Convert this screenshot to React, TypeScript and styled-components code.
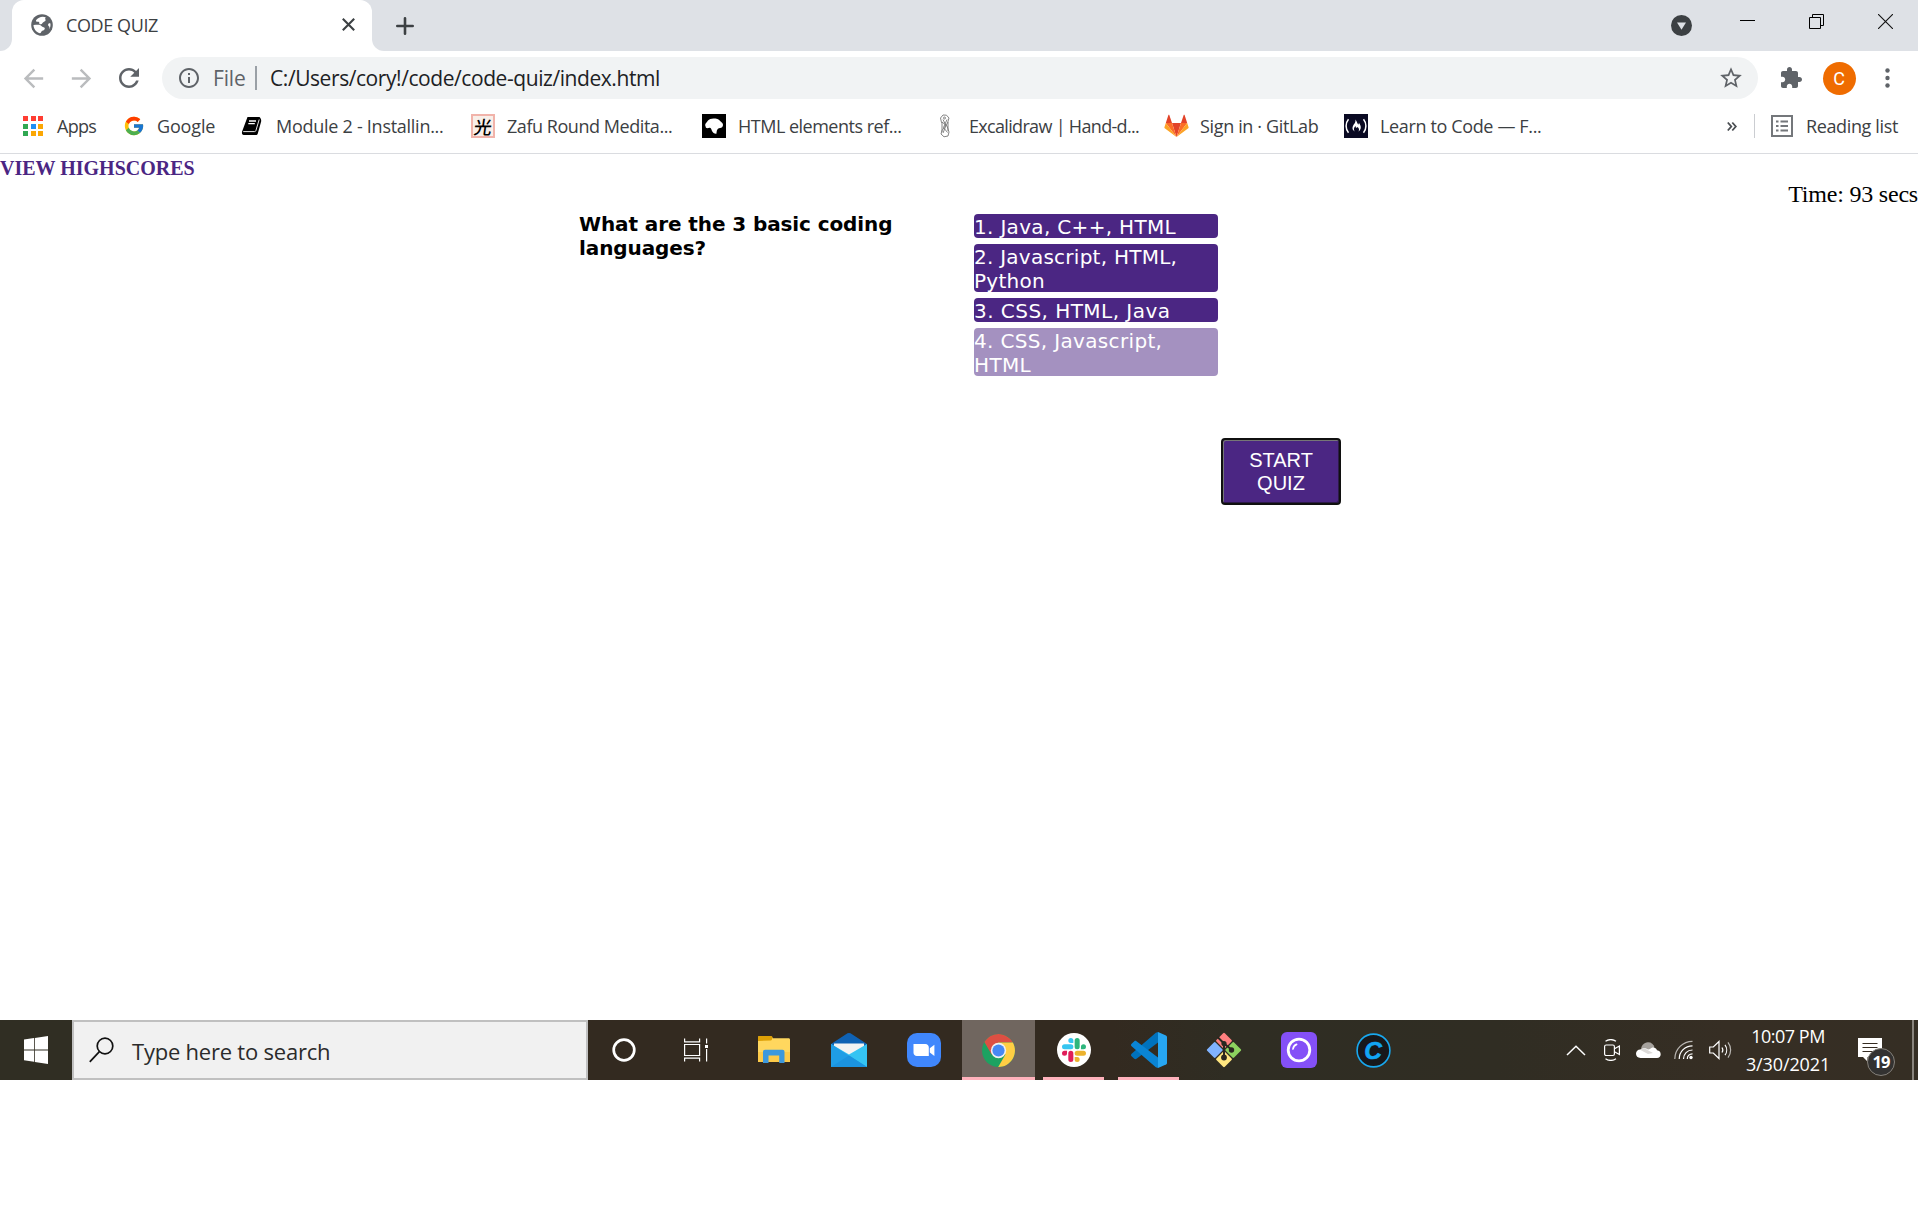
import React from "react";
import styled, { createGlobalStyle } from "styled-components";
import { FcGoogle } from "react-icons/fc";

const UI = `"Open Sans", "Noto Sans", sans-serif`;

const GlobalStyle = createGlobalStyle`
  * { box-sizing: border-box; }
  body { margin: 0; background: #fff; overflow: hidden; }
  svg { display: block; flex: none; }
`;

/* ---------- shared ---------- */

const Screen = styled.div`
  width: 1918px;
  height: 1208px;
  display: flex;
  flex-direction: column;
  background: #fff;
  font-family: ${UI};
  overflow: hidden;
`;

const Label = styled.span<{ $size?: number; $track?: number; $color?: string }>`
  font-size: ${(p) => p.$size ?? 18}px;
  letter-spacing: ${(p) => p.$track ?? 0}px;
  color: ${(p) => p.$color ?? "#3c4043"};
  white-space: pre;
`;

const Slot = styled.div<{ $w: number }>`
  flex: none;
  width: ${(p) => p.$w}px;
  height: 100%;
  display: flex;
  align-items: center;
  justify-content: center;
`;

const Spacer = styled.div`
  flex: 1;
`;

/* ---------- tab strip ---------- */

const TabStrip = styled.div`
  display: flex;
  height: 51px;
  flex: none;
`;

const StripStart = styled.div`
  width: 12px;
  background: #dee1e6;
  border-bottom-right-radius: 12px;
`;

const TabCell = styled.div`
  width: 360px;
  background: linear-gradient(#dee1e6 50%, #fff 50%);
`;

const Tab = styled.div`
  height: 51px;
  display: flex;
  align-items: center;
  gap: 13px;
  padding: 0 17px 2px 19px;
  background: #fff;
  border-radius: 12px 12px 0 0;
`;

const StripRest = styled.div`
  flex: 1;
  display: flex;
  align-items: center;
  padding-left: 24px;
  background: #dee1e6;
  border-bottom-left-radius: 12px;
`;

const WindowControls = styled.div`
  display: flex;
  height: 43px;
  align-self: flex-start;
  margin-left: 21px;
  margin-right: -2px;
`;

/* ---------- toolbar ---------- */

const Toolbar = styled.div`
  display: flex;
  align-items: center;
  height: 54px;
  flex: none;
  padding: 0 7px 0 9px;
`;

const Omnibox = styled.div`
  display: flex;
  align-items: center;
  width: 1596px;
  height: 42px;
  margin: 0 9px;
  padding: 0 14px 0 15px;
  border-radius: 21px;
  background: #f1f3f4;
`;

const Scheme = styled(Label)`
  width: 42px;
  margin-left: 12px;
`;

const Divider = styled.div<{ $color: string; $w: number }>`
  flex: none;
  width: ${(p) => p.$w}px;
  height: 24px;
  background: ${(p) => p.$color};
`;

const Url = styled(Label)`
  margin-left: 13px;
`;

const Avatar = styled.div`
  width: 33px;
  height: 33px;
  display: flex;
  align-items: center;
  justify-content: center;
  border-radius: 50%;
  background: #ef6c00;
  color: #fff;
  font: 400 18px Roboto, sans-serif;
`;

/* ---------- bookmarks ---------- */

const BookmarkBar = styled.div`
  display: flex;
  align-items: center;
  height: 49px;
  flex: none;
  padding: 0 20px 6px 21px;
  border-bottom: 1px solid #dadce0;
`;

const Bookmark = styled.div<{ $w: number; $gap: number }>`
  display: flex;
  align-items: center;
  gap: ${(p) => p.$gap}px;
  width: ${(p) => p.$w}px;
  flex: none;
`;

const BookmarkLabel = styled(Label)`
  padding-bottom: 1px;
`;

const BookmarkIcon = styled.div`
  width: 24px;
  height: 24px;
  flex: none;
  display: flex;
  align-items: center;
  justify-content: center;
`;

const AppsGrid = styled.div`
  display: grid;
  grid-template-columns: repeat(3, 5px);
  grid-auto-rows: 5px;
  gap: 2.5px;
`;

const Dot = styled.i<{ $c: string }>`
  background: ${(p) => p.$c};
`;

const Zafu = styled.div`
  width: 24px;
  height: 24px;
  display: flex;
  align-items: center;
  justify-content: center;
  border: 2px solid #f1b3aa;
  background: #f8efe9;
  color: #000;
  font: 500 18px/20px "Noto Sans CJK JP", "Noto Sans CJK SC", sans-serif;
`;

const Brush = styled.span`
  transform: skewX(-8deg);
`;

const ReadingList = styled.div`
  display: flex;
  align-items: center;
  gap: 13px;
  margin-left: 16px;
`;

const More = styled.div`
  width: 10px;
  margin-right: 17px;
`;

/* ---------- page ---------- */

const Page = styled.main`
  height: 866px;
  flex: none;
  background: #fff;
`;

const Highscores = styled.a`
  display: block;
  height: 26px;
  padding-top: 2px;
  font: 700 20px/24px "Liberation Serif", serif;
  color: #4b2683;
`;

const Timer = styled.div`
  height: 32px;
  font: 400 24px/28px "Liberation Serif", serif;
  letter-spacing: -0.2px;
  color: #000;
  white-space: nowrap;
  text-align: right;
`;

const Quiz = styled.section`
  display: flex;
  height: 226px;
  padding-left: 579px;
`;

const Question = styled.h2`
  margin: 0;
  width: 395px;
  padding-right: 60px;
  font: 700 20px/24px "DejaVu Sans", sans-serif;
  letter-spacing: -0.1px;
  color: #000;
`;

const Answers = styled.ol`
  list-style: none;
  margin: 2px 0 0;
  padding: 0;
  width: 244px;
  display: flex;
  flex-direction: column;
  gap: 6px;
`;

const Answer = styled.li<{ $track: number; $faded?: boolean }>`
  border-radius: 4px;
  background: #4b2683;
  color: #fff;
  font: 400 20px/24px "DejaVu Sans", sans-serif;
  letter-spacing: ${(p) => p.$track}px;
  opacity: ${(p) => (p.$faded ? 0.5 : 1)};
`;

const AnswerText = styled.span`
  display: block;
  transform: translateY(1px);
`;

const StartButton = styled.button`
  display: block;
  width: 120px;
  height: 67px;
  margin: 0 0 0 1221px;
  padding: 0 16px;
  border: 2px solid #101010;
  border-radius: 4px;
  box-shadow: inset 1px 1px 0 #767676, inset -1px -1px 0 #2c1a48;
  background: #4b2683;
  color: #fff;
  font: 400 20px/23px "Liberation Sans", Arial, sans-serif;
`;

/* ---------- taskbar ---------- */

const Taskbar = styled.footer`
  display: flex;
  height: 60px;
  flex: none;
  background: linear-gradient(90deg, #302e23 0%, #302e23 4%, #332a20 31%, #332a20 58%, #2f2d23 64%, #302d23 78%, #362e24 90%, #352e24 100%);
`;

const Search = styled.div`
  width: 516px;
  display: flex;
  align-items: center;
  gap: 18px;
  padding-left: 15px;
  border: 2px solid #c0c0c0;
  background: #f1f1f1;
`;

const SearchText = styled(Label)`
  padding-top: 2px;
`;

const TaskSlot = styled.div<{ $active?: boolean; $open?: boolean }>`
  width: 75px;
  height: 60px;
  flex: none;
  padding: 0 ${(p) => (p.$active ? 1 : 7)}px;
  display: flex;
  align-items: center;
  justify-content: center;
  background: ${(p) => (p.$active ? "#70665f" : "transparent")} content-box;
  position: relative;

  &::after {
    content: "";
    display: ${(p) => (p.$open || p.$active ? "block" : "none")};
    position: absolute;
    left: ${(p) => (p.$active ? 1 : 7)}px;
    right: ${(p) => (p.$active ? 1 : 7)}px;
    bottom: 0;
    height: 3px;
    background: #ffb2bc;
  }
`;

const Clock = styled.div`
  width: 100px;
  margin-top: 2px;
  display: flex;
  flex-direction: column;
  align-items: center;
  line-height: 28px;
`;

const Notifications = styled.div`
  position: relative;
  width: 60px;
  height: 60px;
  margin-right: 14px;
`;

const BubbleIcon = styled.svg`
  margin: 18px 0 0 20px;
`;

const Badge = styled.div`
  position: absolute;
  left: 29px;
  top: 28px;
  width: 28px;
  height: 28px;
  padding-bottom: 1px;
  border-radius: 50%;
  border: 1px solid #85817b;
  background: #333231;
  display: flex;
  align-items: center;
  justify-content: center;
  color: #fff;
  font: 700 16.5px ${UI};
  letter-spacing: -0.9px;
`;

const ShowDesktop = styled.div`
  width: 6px;
  border-left: 2px solid #89847d;
`;

/* ---------- icons ---------- */

const Glyph = ({ d, size, color = "#5f6368" }: { d: string; size: number; color?: string }) => (
  <svg width={size} height={size} viewBox="0 0 24 24" fill={color}>
    <path d={d} />
  </svg>
);

const BACK = "M20 11H7.83l5.59-5.59L12 4l-8 8 8 8 1.41-1.41L7.83 13H20v-2z";
const FORWARD = "M4 11h12.17l-5.59-5.59L12 4l8 8-8 8-1.41-1.41L16.17 13H4v-2z";
const RELOAD =
  "M17.65 6.35C16.2 4.9 14.21 4 12 4c-4.42 0-7.99 3.58-7.99 8s3.57 8 7.99 8c3.73 0 6.84-2.55 7.73-6h-2.08c-.82 2.33-3.04 4-5.65 4-3.31 0-6-2.69-6-6s2.69-6 6-6c1.66 0 3.14.69 4.22 1.78L13 11h7V4l-2.35 2.35z";
const INFO =
  "M11 7h2v2h-2zm0 4h2v6h-2zm1-9C6.48 2 2 6.48 2 12s4.48 10 10 10 10-4.48 10-10S17.52 2 12 2zm0 18c-4.41 0-8-3.59-8-8s3.59-8 8-8 8 3.59 8 8-3.59 8-8 8z";
const STAR =
  "M22 9.24l-7.19-.62L12 2 9.19 8.63 2 9.24l5.46 4.73L5.82 21 12 17.27 18.18 21l-1.63-7.03L22 9.24zM12 15.4l-3.76 2.27 1-4.28-3.32-2.88 4.38-.38L12 6.1l1.71 4.04 4.38.38-3.32 2.88 1 4.28L12 15.4z";
const PUZZLE =
  "M20.5 11H19V7c0-1.1-.9-2-2-2h-4V3.5C13 2.12 11.88 1 10.5 1S8 2.12 8 3.5V5H4c-1.1 0-1.99.9-1.99 2v3.8H3.5c1.49 0 2.7 1.21 2.7 2.7s-1.21 2.7-2.7 2.7H2V20c0 1.1.9 2 2 2h3.8v-1.5c0-1.49 1.21-2.7 2.7-2.7 1.49 0 2.7 1.21 2.7 2.7V22H17c1.1 0 2-.9 2-2v-4h1.500c1.38 0 2.5-1.12 2.5-2.5S21.88 11 20.5 11z";

const GlobeIcon = () => (
  <svg width="22" height="22" viewBox="0 0 22 22">
    <circle cx="11" cy="11" r="10.8" fill="#5f6368" />
    <path
      fill="#fff"
      d="M14.8 3.200C11 1.900 7.200 3.200 5.200 6c-.7 1.100.2 2 1.500 1.800 1-.2 1.800.4 1.600 1.400-.1.800.8 1.200 1.700 1 1.200-.3 1.500-1.700 2.700-2.300.9-.5 1.900-.700 1.900-1.700 0-.8-.5-.9-.4-1.700 0-.5.300-.9.600-1.300z"
    />
    <path
      fill="#fff"
      d="M2.500 11c.1 3.900 2.700 7.200 6.300 8.200 1.500-.2 1.200-1.700 2.200-2.300 1.200-.6 2.600-.8 2.800-2.200.1-1.200-.9-1.700-2-1.800-1.200-.1-1.500-1.500-2.800-1.900-1.300-.5-4.300 0-6.500 0zM19.400 9.500c-1.200-.5-2.400.2-2.300 1.400.1 1.100 1.300 1.300 1.400 2.300 0 .700-.2 1.500-.3 2.100 1.100-1.700 1.500-3.900 1.200-5.800z"
    />
  </svg>
);

const CloseIcon = () => (
  <svg width="13" height="13" viewBox="0 0 13 13" stroke="#3c4043" strokeWidth="2.1">
    <path d="M.8.8l11.400 11.400M12.200.8L.8 12.200" />
  </svg>
);

const PlusIcon = () => (
  <svg width="18" height="18" viewBox="0 0 18 18" stroke="#3c4043" strokeWidth="2.600" strokeLinecap="round">
    <path d="M9 1.300v15.400M1.300 9h15.400" />
  </svg>
);

const TabSearchIcon = () => (
  <svg width="21" height="21" viewBox="0 0 21 21">
    <circle cx="10.500" cy="10.500" r="10.500" fill="#3c4043" />
    <path d="M6 7.500h9l-4.500 7.200z" fill="#dee1e6" />
  </svg>
);

const BookIcon = () => (
  <svg width="21" height="20" viewBox="0 0 21 20">
    <path d="M6.500 1h11.700c1 0 2.600 2.800 1.800 5l-3.200 11.500c-.3 1-1 1.500-2 1.500H2.800C1 19 .8 17.500 1 15.800z" fill="#000" />
    <path d="M8 5h7M7.300 7.700h6.500" stroke="#fff" strokeWidth="1.300" />
    <path d="M2.200 15.600h11.300c.8 0 1.200-.4 1.400-1L18.200 3.500" fill="none" stroke="#fff" strokeWidth=".9" />
  </svg>
);

const HtmlRefIcon = () => (
  <svg width="24" height="24" viewBox="0 0 24 24">
    <path d="M0 0h24v24H0z" />
    <path d="M3.200 11.500C2.800 9.500 5 8.500 6 6.600 7.300 4.800 10.500 4 13.500 4.600c3 .3 4 2 6 3.600 1.700 1.200 2 3 .8 4.900-1.300 1.200-3.200.8-4.300 1.600-1.300 1-1.300 2.800-1.600 5-2 .2-3.600-.9-4.400-2.600-.6-1.800-.6-2.600-1.600-3.200-1.800-.3-2.600.6-4 .2-1-.5-.5-1.700-1.200-2.600z" fill="#fff" />
  </svg>
);

const ExcalidrawIcon = () => (
  <svg width="12" height="24" viewBox="0 0 12 24" fill="none" stroke="#777" strokeWidth=".9">
    <path d="M2.500 8.500L1.500 4 4 1l3.500.2L10 4 8.500 9 3 16.500 2 20l3 2.800 4-.8L10 18 8 12 3 8zM4 5.500l3 6L4 19M8 5.500l-3.500 8 4 5M3 8v10M9 8v9" />
    <circle cx="5.500" cy="4" r="1" />
  </svg>
);

const GitlabIcon = () => (
  <svg width="25" height="24" viewBox="0 0 25 24">
    <path d="M12.500 23L17 9H8z" fill="#e24329" />
    <path d="M12.500 23L8 9H1.800zM12.500 23L17 9h6.200z" fill="#fc6d26" />
    <path d="M1.800 9L.4 13.200c-.1.400 0 .8.300 1L12.500 23zM23.200 9l1.400 4.200c.1.400 0 .8-.3 1L12.500 23z" fill="#fca326" />
    <path d="M1.800 9H8L5.300 1c-.2-.4-.7-.4-.9 0zM23.200 9H17l2.700-8c.2-.4.7-.4.9 0z" fill="#e24329" />
  </svg>
);

const CampIcon = () => (
  <svg width="24" height="24" viewBox="0 0 24 24">
    <path d="M0 0h24v24H0z" fill="#0a0a23" />
    <path d="M4.500 5.200C1.300 9 1.300 15 4.500 18.800M19.500 5.200c3.200 3.800 3.200 9.800 0 13.600" fill="none" stroke="#fff" strokeWidth="1.500" />
    <path d="M11.300 5.500c2 2 1.600 3.500 2.800 5 .8-.3.800-1 .7-1.700 2.300 2.600 3.200 6.600-.4 8.800 1.200-2 .6-3.300-.8-4.600-1 1.500-2.300.6-2-1.300-1.800 2-2.500 4-.6 5.900C7.500 16 8.200 12.600 9.900 10.300c1.300-1.600 1.900-2.800 1.400-4.800z" fill="#fff" />
  </svg>
);

const MoreIcon = () => (
  <svg width="10" height="11" viewBox="0 0 10 11" fill="none" stroke="#4a4e52" strokeWidth="1.800">
    <path d="M.8 1.500L4.300 5.500.8 9.500M5.300 1.500l3.500 4-3.500 4" />
  </svg>
);

const ReadingIcon = () => (
  <svg width="22" height="22" viewBox="0 0 22 22">
    <path d="M1 1h20v20H1z" fill="none" stroke="#74777b" strokeWidth="2" />
    <path d="M5 6.500h2.500M9.500 6.500H17M5 11h2.500M9.500 11H17M5 15.500h2.500M9.500 15.500H17" stroke="#74777b" strokeWidth="2" />
  </svg>
);

const WindowsIcon = () => (
  <svg width="24" height="28" viewBox="0 0 24 28" fill="#fff">
    <path d="M0 3.500l10-1.400v11.300H0zM10.800 2L24 0v13.400H10.800zM0 14.400h10v11.300L0 24.300zM10.800 14.400H24V28l-13.200-2z" />
  </svg>
);

const SearchIcon = () => (
  <svg width="25" height="26" viewBox="0 0 25 26" fill="none" stroke="#111" strokeWidth="1.700">
    <circle cx="16" cy="9" r="7.800" />
    <path d="M10.400 14.600L.8 24.800" />
  </svg>
);

const TaskViewIcon = () => (
  <svg width="24" height="24" viewBox="0 0 24 24" fill="none" stroke="#fff" strokeWidth="1.200">
    <path d="M.6 6.500h15v11H.6zM.6.500v3.300h15V.500M.6 23.500v-3.300h15v3.300M22.600.500v5M22.600 11v12.500" />
    <path d="M21 7h3v3h-3z" fill="#fff" stroke="none" />
  </svg>
);

const FolderIcon = () => (
  <svg width="32" height="28" viewBox="0 0 32 28">
    <path d="M0 1.500C0 .6.600 0 1.500 0H13l2 2.300h15.500c1 0 1.500.6 1.500 1.500V26H0z" fill="#ffd75e" />
    <path d="M0 5V1.500C0 .6.600 0 1.500 0H13c1 0 1.500.8 1.500 1.500S14 4.500 12.500 4.500z" fill="#dda006" />
    <path d="M0 16h32v10H0z" fill="#fdca49" />
    <path d="M5 27V16c0-1.500.8-2.200 2-2.200h17.500c1.200 0 2 .7 2 2.200v11h-5.300v-7.500H10.500V27z" fill="#3d98dc" />
  </svg>
);

const MailIcon = () => (
  <svg width="36" height="34" viewBox="0 0 36 34">
    <path d="M0 11L15 1.200c2-1.500 4-1.500 6 0L36 11v8H0z" fill="#0f62b4" />
    <path d="M3 10.500h30v9L18 28 3 19.500z" fill="#f3f3f3" />
    <path d="M36 11L18 21.500 0 11v23h36z" fill="#35c4f3" />
    <path d="M0 11l36 23H0z" fill="#1f9de6" />
    <path d="M18 22.400L36 34H0z" fill="#1b93df" />
  </svg>
);

const ZoomIcon = () => (
  <svg width="34" height="34" viewBox="0 0 34 34">
    <rect width="34" height="34" rx="10" fill="#4087fc" />
    <path d="M6.500 11h12c1.800 0 3.300 1.500 3.300 3.300V23h-12c-1.800 0-3.300-1.500-3.300-3.300zM22.800 15.200l4.600-3.400V23l-4.600-3.400z" fill="#fff" />
  </svg>
);

const ChromeIcon = () => (
  <svg width="33" height="33" viewBox="-16.500 -16.500 33 33">
    <circle r="16.500" fill="#1da261" />
    <path d="M-14.100-8.500A16.500 16.500 0 0 1 14.400-8H0V0l-6.900 4z" fill="#dd4f43" />
    <path d="M14.400-8A16.500 16.500 0 0 1-.3 16.500L6.900 4 0 0v-8z" fill="#ffce44" />
    <circle r="7.700" fill="#f1f1f1" />
    <circle r="6.100" fill="#4688f4" />
  </svg>
);

const SLACK =
  "M5.042 15.165a2.528 2.528 0 0 1-2.520 2.523A2.528 2.528 0 0 1 0 15.165a2.527 2.527 0 0 1 2.522-2.520h2.520v2.520zM6.313 15.165a2.527 2.527 0 0 1 2.521-2.520 2.527 2.527 0 0 1 2.521 2.520v6.313A2.528 2.528 0 0 1 8.834 24a2.528 2.528 0 0 1-2.521-2.522v-6.313z";

const SlackIcon = () => (
  <svg width="34" height="34" viewBox="-5 -5 34 34">
    <circle cx="12" cy="12" r="17" fill="#fff" />
    {["#e01e5a", "#36c5f0", "#2eb67d", "#ecb22e"].map((c, i) => (
      <path key={c} d={SLACK} fill={c} transform={`rotate(${i * 90} 12 12)`} />
    ))}
  </svg>
);

const VscodeIcon = () => (
  <svg width="36" height="36" viewBox="0 0 36 36">
    <path d="M27 0v10.500L5.500 26.700c-.8.600-1.500.6-2.200 0L.6 24.200c-.8-.7-.8-1.700 0-2.500L24.800.8z" fill="#0072bd" />
    <path d="M27 36V25.500L5.500 9.300c-.8-.6-1.500-.6-2.200 0L.6 11.800c-.8.700-.8 1.700 0 2.500l24.200 20.900z" fill="#0a84d4" />
    <path d="M27 0l8 3.500c.6.300 1 .9 1 1.600v25.800c0 .7-.4 1.300-1 1.600L27 36z" fill="#27a6f2" />
  </svg>
);

const GitIcon = () => (
  <svg width="36" height="36" viewBox="-18 -18 36 36">
    <g transform="rotate(45)">
      <rect x="-12.500" y="-12.500" width="11.900" height="11.900" rx="1.200" fill="#ff8080" />
      <rect x=".6" y="-12.500" width="11.900" height="11.900" rx="1.200" fill="#8dd35f" />
      <rect x="-12.500" y=".6" width="11.900" height="11.900" rx="1.200" fill="#80b3ff" />
      <rect x=".6" y=".6" width="11.900" height="11.900" rx="1.200" fill="#ffe680" />
    </g>
    <path d="M-6.500-13L0-6.500V7M0-6.500l7.500 6" fill="none" stroke="#2a2720" strokeWidth="2" />
    <circle cx="0" cy="-6.500" r="2.600" fill="#2a2720" />
    <circle cx="7.500" cy="0" r="2.700" fill="#2a2720" />
    <circle cx="0" cy="7.500" r="2.900" fill="#2a2720" />
  </svg>
);

const RingIcon = () => (
  <svg width="36" height="36" viewBox="0 0 36 36">
    <rect width="36" height="36" rx="6" fill="#8450f7" />
    <circle cx="18" cy="18" r="10.800" fill="none" stroke="#fff" strokeWidth="2.800" />
    <path d="M12 17c.3-2.300 1.500-3.800 3.600-4.600" fill="none" stroke="#fff" strokeWidth="1.700" strokeLinecap="round" />
  </svg>
);

const CCleanIcon = () => (
  <svg width="35" height="35" viewBox="0 0 35 35">
    <circle cx="17.500" cy="17.500" r="16.400" fill="#17181b" stroke="#18a8ef" strokeWidth="1.600" />
    <text x="17.200" y="26.200" textAnchor="middle" fontFamily="Liberation Sans, sans-serif" fontSize="24.500" fontWeight="700" fontStyle="italic" fill="#12a5f4" stroke="#12a5f4" strokeWidth=".6">
      C
    </text>
  </svg>
);

const CameraIcon = () => (
  <svg width="18" height="22" viewBox="0 0 18 22" fill="none" stroke="#fff" strokeWidth="1.200">
    <rect x="1.600" y="6" width="9.800" height="10.500" rx="1.500" />
    <path d="M11.500 9.800L16.400 7v8.500l-4.900-2.800M2.500 2.200c3-1.900 7.500-1.900 10.500 0M2.500 19.800c3 1.900 7.500 1.900 10.500 0" />
  </svg>
);

const CloudIcon = () => (
  <svg width="25" height="17" viewBox="0 0 25 17">
    <path d="M5 9C4.500 4 8 .3 12 .3c3.500 0 5.500 2 6.500 5L14 10z" fill="#a6a29d" />
    <path d="M4.500 16C1.500 16 0 14 0 11.800 0 9 2.200 7.200 5 7.600c2-2 5-1.600 7 0l2-.5c1.500-2.400 6-2.400 7 1.200 2.500.3 3.700 1.900 3.700 3.900 0 2.300-1.500 3.800-3.700 3.800z" fill="#fff" />
    <path d="M4 7.700c2.500-1.500 5-1.500 7.500.2L17 11l-5 1z" fill="#dcdad8" />
  </svg>
);

const WifiIcon = () => (
  <svg width="20" height="20" viewBox="0 0 20 20" fill="none" stroke="#fff" strokeWidth="1.200">
    <path d="M.8 19C.8 9 9 1.300 18.500 1.300" stroke="#b9b6b2" />
    <path d="M5.200 19C5.200 11.500 11 5.800 18.500 5.800M9.500 19c0-5 3.800-9 9-9M13.300 19c0-3 2.200-5.200 5.200-5.200" />
    <circle cx="17" cy="17.500" r="1.700" fill="#fff" stroke="none" />
  </svg>
);

const VolumeIcon = () => (
  <svg width="23" height="20" viewBox="0 0 23 20" fill="none" stroke="#fff" strokeWidth="1.200">
    <path d="M.7 7h3.600L10 1.500v17L4.300 13H.7z" />
    <path d="M13 7.500c1 1.500 1 3.500 0 5M16 4.800c2.200 3 2.200 7.400 0 10.400" />
    <path d="M19 2.300c3.500 4.500 3.500 10.900 0 15.400" stroke="#b9b6b2" />
  </svg>
);

/* ---------- data ---------- */

const BOOKMARKS: { text: string; w: number; gap: number; track: number; icon: React.ReactNode }[] = [
  {
    text: "Apps", w: 101, gap: 12, track: -0.7,
    icon: (
      <AppsGrid>
        {["#ff3d32", "#ff3d32", "#ff3d32", "#30a852", "#1e8ef5", "#fba704", "#30a852", "#fba704", "#fba704"].map((c, i) => (
          <Dot key={i} $c={c} />
        ))}
      </AppsGrid>
    ),
  },
  { text: "Google", w: 117, gap: 11, track: -0.15, icon: <FcGoogle size={22} /> },
  { text: "Module 2 - Installin...", w: 232, gap: 13, track: -0.27, icon: <BookIcon /> },
  { text: "Zafu Round Medita...", w: 231, gap: 12, track: -0.45, icon: <Zafu><Brush>光</Brush></Zafu> },
  { text: "HTML elements ref...", w: 231, gap: 12, track: -0.5, icon: <HtmlRefIcon /> },
  { text: "Excalidraw | Hand-d...", w: 231, gap: 12, track: -0.68, icon: <ExcalidrawIcon /> },
  { text: "Sign in · GitLab", w: 180, gap: 12, track: -0.35, icon: <GitlabIcon /> },
  { text: "Learn to Code — F...", w: 200, gap: 12, track: -0.36, icon: <CampIcon /> },
];

const ANSWERS = [
  { text: "1. Java, C++, HTML", track: 0.32 },
  { text: "2. Javascript, HTML, Python", track: 0.25 },
  { text: "3. CSS, HTML, Java", track: 0.46 },
  { text: "4. CSS, Javascript, HTML", track: 0.34, faded: true },
];

export default function App() {
  return (
    <Screen>
      <GlobalStyle />
      <TabStrip>
        <StripStart />
        <TabCell>
          <Tab>
            <GlobeIcon />
            <Label $track={-0.4}>CODE QUIZ</Label>
            <Spacer />
            <CloseIcon />
          </Tab>
        </TabCell>
        <StripRest>
          <PlusIcon />
          <Spacer />
          <TabSearchIcon />
          <WindowControls>
            <Slot $w={69}>
              <svg width="15" height="3" viewBox="0 0 15 3"><path d="M0 0h15v1H0z" /></svg>
            </Slot>
            <Slot $w={69}>
              <svg width="15" height="15" viewBox="0 0 15 15" fill="none" stroke="#000">
                <path d="M.5 3.500h11v11H.5zM3.500 3.500v-3h11v11h-3" />
              </svg>
            </Slot>
            <Slot $w={69}>
              <svg width="15" height="15" viewBox="0 0 15 15" stroke="#111" strokeWidth="1.100">
                <path d="M0 0l15 15M15 0L0 15" />
              </svg>
            </Slot>
          </WindowControls>
        </StripRest>
      </TabStrip>

      <Toolbar>
        <Slot $w={48}><Glyph d={BACK} size={29} color="#babcbe" /></Slot>
        <Slot $w={48}><Glyph d={FORWARD} size={29} color="#babcbe" /></Slot>
        <Slot $w={48}><Glyph d={RELOAD} size={30} /></Slot>
        <Omnibox>
          <Glyph d={INFO} size={24} />
          <Scheme $size={21} $track={-0.15} $color="#5f6368">File</Scheme>
          <Divider $color="#9aa0a6" $w={2} />
          <Url $size={21} $track={-0.43} $color="#202124">C:/Users/cory!/code/code-quiz/index.html</Url>
          <Spacer />
          <Glyph d={STAR} size={26} />
        </Omnibox>
        <Slot $w={48}><Glyph d={PUZZLE} size={24} /></Slot>
        <Slot $w={48}><Avatar>C</Avatar></Slot>
        <Slot $w={48}>
          <svg width="5" height="20" viewBox="0 0 5 20" fill="#5f6368">
            <circle cx="2.500" cy="2.500" r="2.200" /><circle cx="2.500" cy="10" r="2.200" /><circle cx="2.500" cy="17.500" r="2.200" />
          </svg>
        </Slot>
      </Toolbar>

      <BookmarkBar>
        {BOOKMARKS.map((b) => (
          <Bookmark key={b.text} $w={b.w} $gap={b.gap}>
            <BookmarkIcon>{b.icon}</BookmarkIcon>
            <BookmarkLabel $track={b.track}>{b.text}</BookmarkLabel>
          </Bookmark>
        ))}
        <Spacer />
        <More><MoreIcon /></More>
        <Divider $color="#cbcdd1" $w={1} />
        <ReadingList>
          <ReadingIcon />
          <BookmarkLabel $track={-0.36}>Reading list</BookmarkLabel>
        </ReadingList>
      </BookmarkBar>

      <Page>
        <Highscores>VIEW HIGHSCORES</Highscores>
        <Timer>Time: 93 secs</Timer>
        <Quiz>
          <Question>What are the 3 basic coding languages?</Question>
          <Answers>
            {ANSWERS.map((a) => (
              <Answer key={a.text} $track={a.track} $faded={a.faded}>
                <AnswerText>{a.text}</AnswerText>
              </Answer>
            ))}
          </Answers>
        </Quiz>
        <StartButton>START QUIZ</StartButton>
      </Page>

      <Taskbar>
        <Slot $w={72}><WindowsIcon /></Slot>
        <Search>
          <SearchIcon />
          <SearchText $size={22} $track={-0.22} $color="#2b2b2b">Type here to search</SearchText>
        </Search>
        <Slot $w={72}>
          <svg width="24" height="24" viewBox="0 0 24 24">
            <circle cx="12" cy="12" r="10.300" fill="none" stroke="#fff" strokeWidth="2.700" />
          </svg>
        </Slot>
        <Slot $w={72}><TaskViewIcon /></Slot>
        <Slot $w={4} />
        <TaskSlot><FolderIcon /></TaskSlot>
        <TaskSlot><MailIcon /></TaskSlot>
        <TaskSlot><ZoomIcon /></TaskSlot>
        <TaskSlot $active><ChromeIcon /></TaskSlot>
        <TaskSlot $open><SlackIcon /></TaskSlot>
        <TaskSlot $open><VscodeIcon /></TaskSlot>
        <TaskSlot><GitIcon /></TaskSlot>
        <TaskSlot><RingIcon /></TaskSlot>
        <TaskSlot><CCleanIcon /></TaskSlot>
        <Spacer />
        <Slot $w={36}>
          <svg width="20" height="11" viewBox="0 0 20 11" fill="none" stroke="#fff" strokeWidth="1.500">
            <path d="M1 10l9-8.700L19 10" />
          </svg>
        </Slot>
        <Slot $w={36}><CameraIcon /></Slot>
        <Slot $w={36}><CloudIcon /></Slot>
        <Slot $w={36}><WifiIcon /></Slot>
        <Slot $w={36}><VolumeIcon /></Slot>
        <Clock>
          <Label $track={-0.49} $color="#fff">10:07 PM</Label>
          <Label $track={-0.12} $color="#fff">3/30/2021</Label>
        </Clock>
        <Notifications>
          <BubbleIcon width="24" height="24" viewBox="0 0 24 24">
            <path d="M0 0h24v19H9.500v4.500L5 19H0z" fill="#fff" />
            <path d="M4.500 5.500h15M4.500 9.500h15M4.500 13.500H15" stroke="#352c22" strokeWidth="1.100" />
          </BubbleIcon>
          <Badge>19</Badge>
        </Notifications>
        <ShowDesktop />
      </Taskbar>
    </Screen>
  );
}
